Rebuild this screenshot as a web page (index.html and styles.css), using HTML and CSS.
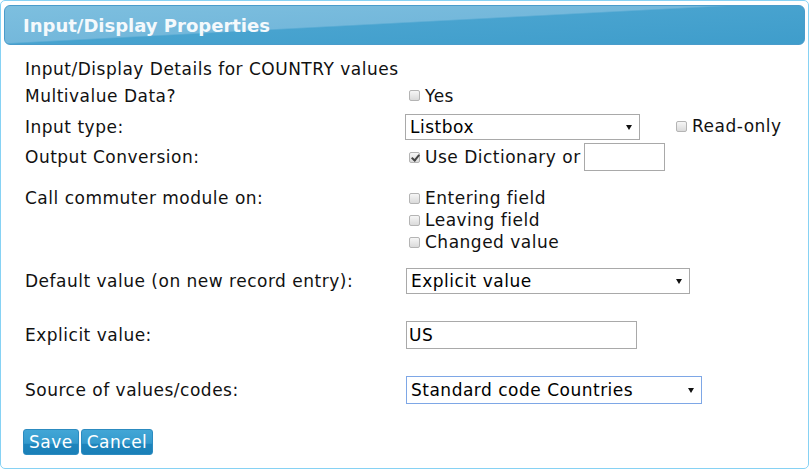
FILE: index.html
```html
<!DOCTYPE html>
<html lang="en">
<head>
    <meta charset="UTF-8">
    <title>Input/Display Properties</title>
    <link rel="stylesheet" href="styles.css">
</head>
<body>
    <div class="dialog">
        <div class="dialog-title">Input/Display Properties</div>

        <form class="props">
            <div class="row intro">
                <span>Input/Display Details for COUNTRY values</span>
            </div>
            <div class="row">
                <span>Multivalue Data?</span>
                <label class="check"><input type="checkbox"> Yes</label>
            </div>
            <div class="row r-input">
                <span>Input type:</span>
                <div class="inline">
                    <div class="select-wrap w-listbox">
                        <select><option>Listbox</option></select>
                    </div>
                    <label class="check readonly"><input type="checkbox"> Read-only</label>
                </div>
            </div>
            <div class="row r-output">
                <span>Output Conversion:</span>
                <div class="inline">
                    <label class="check"><input type="checkbox" checked> Use Dictionary or</label>
                    <input type="text" class="text conv">
                </div>
            </div>
            <div class="row r-commuter">
                <span>Call commuter module on:</span>
                <div class="checklist">
                    <label class="check"><input type="checkbox"> Entering field</label>
                    <label class="check"><input type="checkbox"> Leaving field</label>
                    <label class="check"><input type="checkbox"> Changed value</label>
                </div>
            </div>
            <div class="row r-default">
                <span>Default value (on new record entry):</span>
                <div class="select-wrap w-default">
                    <select><option>Explicit value</option></select>
                </div>
            </div>
            <div class="row r-explicit">
                <span>Explicit value:</span>
                <input type="text" class="text explicit" value="US">
            </div>
            <div class="row r-source">
                <span>Source of values/codes:</span>
                <div class="select-wrap w-source focused">
                    <select><option>Standard code Countries</option></select>
                </div>
            </div>

            <div class="buttons">
                <button type="button">Save</button><button type="button">Cancel</button>
            </div>
        </form>
    </div>
</body>
</html>
```
FILE: styles.css
```css
body {
    margin: 0;
    font-family: "DejaVu Sans", Verdana, sans-serif;
    font-size: 17px;
    letter-spacing: 0.5px;
    color: #111;
    background: #fff;
}

.dialog {
    width: 801px;
    height: 463px;
    border: 1px solid #86d2f4;
    border-radius: 5px;
    padding: 4px 3px 0 3px;
    background: #fff;
}

.dialog-title {
    height: 38px;
    line-height: 40px;
    padding-left: 18px;
    border: 1px solid #4a9ccb;
    border-radius: 6px;
    background: linear-gradient(177deg, #7dbfdf 0%, #74b8db 46%, #48a3cf 48%, #3f9dcb 100%);
    color: #f4f9fc;
    font-weight: bold;
    font-size: 18px;
    letter-spacing: 0;
}

.props {
    padding: 10px 0 0 21px;
}

.row {
    display: grid;
    grid-template-columns: 380px auto;
    align-items: center;
    height: 27px;
}

.r-input {
    margin-top: 3px;
    height: 30px;
}

.r-output {
    height: 30px;
}

.r-commuter {
    margin-top: 15px;
    height: auto;
    align-items: start;
    line-height: 22px;
}

.r-default {
    margin-top: 15px;
    height: 26px;
}

.r-explicit {
    margin-top: 27px;
}

.r-source {
    margin-top: 28px;
}

.inline {
    display: flex;
    align-items: center;
}

.checklist {
    display: flex;
    flex-direction: column;
}

.check {
    display: flex;
    align-items: center;
    gap: 5px;
    padding-left: 4px;
}

.check input {
    appearance: none;
    -webkit-appearance: none;
    width: 11px;
    height: 11px;
    margin: 0;
    border: 1px solid #b4b4b4;
    border-radius: 2px;
    background: linear-gradient(#f6f6f6, #dadada);
    position: relative;
    flex: none;
}

.check input:checked::after {
    content: "";
    position: absolute;
    left: 3px;
    top: 0px;
    width: 3px;
    height: 6px;
    border: solid #444;
    border-width: 0 2px 2px 0;
    transform: rotate(40deg);
}

.readonly {
    margin-left: 32px;
    margin-top: -2px;
}

.select-wrap {
    position: relative;
    height: 26px;
}

.select-wrap select {
    appearance: none;
    -webkit-appearance: none;
    width: 100%;
    height: 26px;
    margin: 0;
    padding: 0 0 0 4px;
    border: 1px solid #a9a9a9;
    background: #fff;
    font-family: inherit;
    font-size: 17px;
    letter-spacing: 0.5px;
    color: #000;
    border-radius: 0;
}

.select-wrap::after {
    content: "";
    position: absolute;
    right: 8px;
    top: 11px;
    border-left: 3px solid transparent;
    border-right: 3px solid transparent;
    border-top: 5px solid #111;
}

.w-listbox {
    width: 235px;
}

.w-default {
    width: 284px;
    margin-left: 1px;
}

.w-source {
    width: 296px;
    height: 28px;
    margin-left: 1px;
}

.w-source select {
    height: 28px;
}

.w-source::after {
    top: 12px;
}

.focused select {
    border-color: #7ea7e6;
}

.text {
    margin: 0;
    border: 1px solid #a9a9a9;
    font-family: inherit;
    font-size: 17px;
    letter-spacing: 0.5px;
    color: #000;
    box-sizing: border-box;
    padding: 0 2px;
}

.conv {
    width: 81px;
    height: 28px;
    margin-left: 3px;
}

.explicit {
    width: 231px;
    height: 28px;
    margin-left: 1px;
}

.buttons {
    display: flex;
    gap: 2px;
    margin-top: 26px;
    margin-left: -2px;
}

.buttons button {
    height: 26px;
    padding: 0 5px;
    border: 1px solid #2c8bc0;
    border-radius: 3px;
    background: linear-gradient(#42a6d6 0%, #349acd 55%, #1e84bb 60%, #1a80b8 100%);
    color: #fff;
    font-family: inherit;
    font-size: 17px;
    letter-spacing: 0.5px;
    cursor: pointer;
}
```
